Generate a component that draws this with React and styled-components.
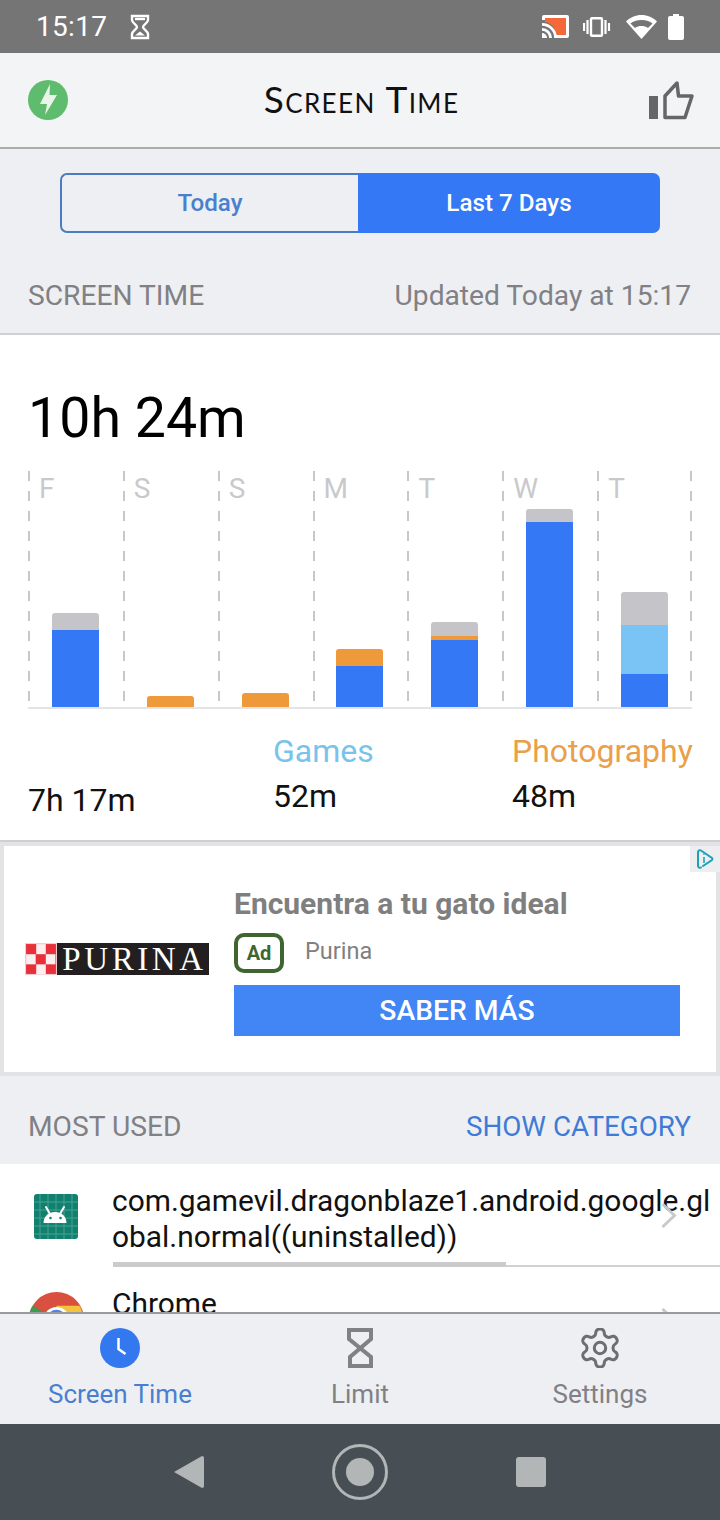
import React from 'react';
import styled, { createGlobalStyle } from 'styled-components';

const GlobalStyle = createGlobalStyle`
  html, body { margin: 0; padding: 0; background: #eeeff3; }
  * { box-sizing: border-box; }
  body { font-family: Roboto, "Liberation Sans", sans-serif; }
`;

const Screen = styled.div`
  width: 720px;
  height: 1520px;
  display: flex;
  flex-direction: column;
  overflow: hidden;
  background: #eeeff3;
`;

const StatusBar = styled.div`
  height: 53px;
  flex: none;
  background: #757575;
  display: flex;
  align-items: center;
  padding: 0 0 0 36px;
  color: #fff;
`;

const Clock = styled.span`
  font-size: 28px;
  margin-right: 23px;
  letter-spacing: 0.3px;
`;

const StatusRight = styled.div`
  margin-left: auto;
  display: flex;
  align-items: center;
  gap: 11px;
  padding-right: 36px;
`;

const Header = styled.div`
  height: 96px;
  flex: none;
  background: #f3f4f6;
  border-bottom: 2px solid #aaaaaa;
  display: grid;
  grid-template-columns: 1fr auto 1fr;
  align-items: center;
  padding: 0 25px 0 28px;
`;

const HeaderEnd = styled.div`
  justify-self: end;
  line-height: 0;
`;

const HeaderStart = styled.div`
  line-height: 0;
`;

const Title = styled.div`
  font-family: Lato, sans-serif;
  font-variant: small-caps;
  font-size: 37px;
  letter-spacing: 1.4px;
  color: #111;
  line-height: 1;
  padding-bottom: 4px;
`;

const Segmented = styled.div`
  margin: 24px 60px 0;
  height: 60px;
  flex: none;
  display: flex;
`;

const Segment = styled.div`
  flex: ${props => (props.$active ? 1 : 'none')};
  width: ${props => (props.$active ? 'auto' : '298px')};
  display: flex;
  align-items: center;
  justify-content: center;
  font-size: 24.2px;
  font-weight: 500;
  color: ${props => (props.$active ? '#fff' : '#4a7fd0')};
  background: ${props => (props.$active ? '#3478f6' : 'transparent')};
  border: ${props => (props.$active ? 'none' : '2px solid #4a7cc4')};
  border-right: none;
  border-radius: ${props => (props.$active ? '0 7px 7px 0' : '7px 0 0 7px')};
`;

const SectionHead = styled.div`
  flex: none;
  display: flex;
  align-items: center;
  justify-content: space-between;
  padding: ${props => props.$pad}px 29px 0 28px;
  height: ${props => props.$height}px;
  font-size: 28.2px;
  color: #808085;
`;

const Action = styled.span`
  color: #3f7bd6;
  font-size: 27.8px;
`;

const Card = styled.div`
  flex: none;
  height: 509px;
  background: #fff;
  border-top: 2px solid #cfcfd2;
  border-bottom: 2px solid #cfcfd2;
  padding: 53px 28px 0;
`;

const Total = styled.div`
  font-size: 55.5px;
  line-height: 62px;
  color: #000;
`;

const dashes = 'repeating-linear-gradient(to bottom, #c8c8c8 0 10px, transparent 10px 20px)';

const Chart = styled.div`
  margin-top: 21px;
  height: 238px;
  display: grid;
  grid-template-columns: repeat(7, 1fr);
  border-bottom: 2px solid #e4e4e6;
  background-image: ${dashes};
  background-size: 2px 100%;
  background-repeat: no-repeat;
  background-position: right top;
`;

const Day = styled.div`
  display: flex;
  flex-direction: column;
  justify-content: space-between;
  align-items: center;
  background-image: ${dashes};
  background-size: 2px 100%;
  background-repeat: no-repeat;
  background-position: left top;
`;

const DayLabel = styled.div`
  align-self: flex-start;
  padding: 3px 0 0 11px;
  font-size: 28px;
  line-height: 30px;
  color: #c9c9cc;
`;

const Bar = styled.div`
  width: 47px;
  display: flex;
  flex-direction: column;
  border-radius: 3px 3px 0 0;
  overflow: hidden;
`;

const Stack = styled.div`
  background: ${props => props.$color};
`;

const Stats = styled.div`
  display: grid;
  grid-template-columns: 245px 239px auto;
  align-items: end;
  margin-top: 24px;
`;

const StatName = styled.div`
  font-size: 32px;
  line-height: 36px;
  white-space: nowrap;
  color: ${props => props.$color};
`;

const StatValue = styled.div`
  font-size: 32px;
  line-height: 36px;
  color: #111;
  margin-top: 9px;
  position: relative;
  top: ${props => props.$drop || 0}px;
`;

const Ad = styled.div`
  flex: none;
  height: 234px;
  background: #fff;
  border: 4px solid #e3e3e5;
  position: relative;
  display: flex;
  align-items: center;
  padding: 0 0 0 21px;
`;

const AdChoice = styled.div`
  position: absolute;
  top: 0;
  right: -4px;
  width: 30px;
  height: 26px;
  background: #eceef0;
  display: flex;
  align-items: center;
  justify-content: center;
`;

const Logo = styled.div`
  flex: none;
  width: 184px;
  height: 32px;
  display: flex;
  background: #231f20;
`;

const LogoWord = styled.span`
  flex: 1;
  padding-left: 3px;
  font-family: "Liberation Serif", serif;
  font-size: 33px;
  line-height: 33px;
  letter-spacing: 3.6px;
  color: #fff;
  text-align: center;
  white-space: nowrap;
`;

const AdBody = styled.div`
  margin: 4px 0 0 25px;
  width: 446px;
  display: flex;
  flex-direction: column;
`;

const AdTitle = styled.div`
  font-size: 30px;
  line-height: 36px;
  font-weight: 700;
  color: #7f7f7f;
`;

const AdMeta = styled.div`
  display: flex;
  align-items: center;
  margin-top: 11px;
  font-size: 23.5px;
  color: #808080;
`;

const AdSource = styled.span`
  padding-bottom: 4px;
`;

const AdBadge = styled.div`
  width: 50px;
  height: 40px;
  border: 4px solid #3f6630;
  border-radius: 10px;
  display: flex;
  align-items: center;
  justify-content: center;
  margin-right: 21px;
  font-size: 20px;
  font-weight: 700;
  color: #3f6630;
`;

const AdButton = styled.div`
  margin-top: 12px;
  height: 51px;
  background: #4285f4;
  color: #fff;
  display: flex;
  align-items: center;
  justify-content: center;
  font-size: 28.3px;
  font-weight: 500;
`;

const List = styled.div`
  flex: 1;
  min-height: 0;
  overflow: hidden;
  background: #fff;
`;

const Row = styled.div`
  position: relative;
  display: flex;
  padding-top: ${props => props.$top}px;
`;

const RowIcon = styled.div`
  flex: none;
  width: 112px;
  display: flex;
  justify-content: center;
  padding-top: ${props => props.$top}px;
`;

const RowBody = styled.div`
  flex: 1;
  min-width: 0;
`;

const RowName = styled.div`
  font-size: 29.9px;
  line-height: 36px;
  color: #111;
  word-break: break-all;
`;

const Usage = styled.div`
  margin: 7px 0 0 1px;
  height: 5px;
  border-bottom: 2px solid #d2d2d4;
`;

const UsageFill = styled.div`
  height: 5px;
  background: #cbcbcd;
`;

const Chevron = styled.div`
  position: absolute;
  right: 42px;
  top: ${props => props.$top}px;
  line-height: 0;
`;

const TabBar = styled.div`
  flex: none;
  height: 112px;
  background: #eeeff3;
  border-top: 2px solid #999a9c;
  display: grid;
  grid-template-columns: repeat(3, 1fr);
`;

const Tab = styled.div`
  display: flex;
  flex-direction: column;
  align-items: center;
  padding-top: 14px;
  font-size: 26px;
  color: ${props => (props.$active ? '#4a7fd0' : '#808085')};
`;

const TabLabel = styled.span`
  margin-top: 10px;
  line-height: 32px;
`;

const NavBar = styled.div`
  flex: none;
  height: 96px;
  background: #474f54;
  display: flex;
  align-items: center;
  justify-content: center;
  gap: 128px;
`;

const HourglassSmall = () => (
  <svg width="20" height="26" viewBox="0 0 20 26" fill="none" stroke="#fff" strokeWidth="2.4">
    <path d="M2 2h16v4c0 3-5 5-5 7s5 4 5 7v4H2v-4c0-3 5-5 5-7S2 9 2 6z" />
    <path d="M5 21.5l5-4 5 4z" fill="#fff" stroke="none" />
    <path d="M5 5h10" />
  </svg>
);

const CastIcon = () => (
  <svg width="30" height="24" viewBox="0 0 30 24">
    <path d="M3 3h21v17H14C14 13 9 8 3 7z" fill="#f4683a" />
    <path d="M0 5V2a2 2 0 0 1 2-2h23a2 2 0 0 1 2 2v19a2 2 0 0 1-2 2H14v-3h10V3H3v2z" fill="#fff" />
    <path d="M0 8a15 15 0 0 1 15 15h-2.800A12.200 12.200 0 0 0 0 10.800z" fill="#fff" />
    <path d="M0 13a10 10 0 0 1 10 10H7.200A7.200 7.200 0 0 0 0 15.800z" fill="#fff" />
    <path d="M0 18a5 5 0 0 1 5 5H0z" fill="#fff" />
  </svg>
);

const VibrateIcon = () => (
  <svg width="30" height="20" viewBox="0 0 30 20" fill="none" stroke="#fff">
    <rect x="8" y="1.200" width="11" height="17.600" rx="1" strokeWidth="2.400" />
    <path d="M1 6v8M4.500 3v14M22.500 3v14M26 6v8" strokeWidth="2.200" />
  </svg>
);

const WifiIcon = () => (
  <svg width="33" height="24" viewBox="-2 0 33 24">
    <path d="M15.500 24L0 6.500C4 2.500 9.500 0 15.500 0S27 2.500 31 6.500z" fill="#fff" />
    <path d="M15.500 5C10.500 5 7 6.500 4.500 8.500L9 13c2-1.500 4-2 6.500-2s4.500.500 6.500 2l4.500-4.500C24 6.500 20.500 5 15.500 5z" fill="#757575" />
  </svg>
);

const BatteryIcon = () => (
  <svg width="16" height="26" viewBox="0 0 16 26">
    <path d="M5 0h6v2h3a2 2 0 0 1 2 2v20a2 2 0 0 1-2 2H2a2 2 0 0 1-2-2V4a2 2 0 0 1 2-2h3z" fill="#fff" />
  </svg>
);

const BoltBadge = () => (
  <svg width="40" height="40" viewBox="0 0 40 40">
    <circle cx="20" cy="20" r="20" fill="#5fbb6d" />
    <path d="M22 4L12 24h7l-2 11 12-20h-7.500z" fill="#e8f5e8" />
  </svg>
);

const ThumbIcon = () => (
  <svg width="46" height="40" viewBox="0 0 46 40" fill="none">
    <path d="M0 16h9v23H0z" fill="#666" />
    <path d="M16 37.500V16L28 3l1.500 13H43l-7 21.500z" stroke="#666" strokeWidth="3.500" strokeLinejoin="round" />
  </svg>
);

const AdChoiceIcon = () => (
  <svg width="20" height="22" viewBox="0 0 20 22" fill="none" stroke="#1ea0b8" strokeWidth="2">
    <path d="M3 4a2 2 0 0 1 3-1.500l11 7.500a1.500 1.500 0 0 1 0 2L8 18" strokeLinecap="round" />
    <path d="M3 4v14a2 2 0 0 0 3 1.500" strokeLinecap="round" />
    <path d="M9 9v6" stroke="#47b5c9" />
    <circle cx="9" cy="6" r="1" fill="#47b5c9" stroke="none" />
  </svg>
);

const PurinaCheck = () => (
  <svg width="32" height="32" viewBox="0 0 30 30">
    <rect width="30" height="30" fill="#f6c9cc" />
    <rect x="1" y="1" width="28" height="28" fill="#e8303a" />
    {[[10.500, 1], [1, 10.500], [19.500, 10.500], [10.500, 20]].map(([x, y]) => (
      <rect key={`${x}-${y}`} x={x} y={y} width="9" height="9.500" fill="#fbeeee" />
    ))}
  </svg>
);

const AndroidTile = () => (
  <svg width="44" height="45" viewBox="0 0 44 45">
    <rect width="44" height="45" rx="3" fill="#12806f" />
    <path d="M0 8h44M0 16h44M0 24h44M0 32h44M0 40h44M6 0v45M14 0v45M22 0v45M30 0v45M38 0v45" stroke="#45a294" strokeWidth="1" />
    <path d="M9.500 29c0-6.500 5-11 11.500-11s11.500 4.500 11.500 11z" fill="#fff" />
    <path d="M12 13l4 7M30 13l-4 7" stroke="#fff" strokeWidth="2" strokeLinecap="round" />
    <circle cx="16.500" cy="24" r="1.300" fill="#12806f" />
    <circle cx="26.500" cy="24" r="1.300" fill="#12806f" />
  </svg>
);

const ChromeIcon = () => (
  <svg width="55" height="55" viewBox="0 0 48 48">
    <circle cx="24" cy="24" r="24" fill="#d9503f" />
    <path d="M24 24L3 36a24 24 0 0 0 21 12z" fill="#3d9a4e" />
    <path d="M3 12a24 24 0 0 0 0 24l21-12z" fill="#3d9a4e" />
    <path d="M24 12h20a24 24 0 0 1-20 36z" fill="#f4c23c" />
    <circle cx="24" cy="24" r="11" fill="#fff" />
    <circle cx="24" cy="24" r="8.500" fill="#4a84ee" />
  </svg>
);

const ChevronIcon = () => (
  <svg width="18" height="27" viewBox="0 0 18 27" fill="none" stroke="#c9c9cb" strokeWidth="3">
    <path d="M2.500 2l12 11.500-12 11.500" />
  </svg>
);

const ClockTab = () => (
  <svg width="40" height="40" viewBox="0 0 40 40">
    <circle cx="20" cy="20" r="20" fill="#3478f0" />
    <path d="M18.500 10v11l7 5" fill="none" stroke="#fff" strokeWidth="2.500" />
  </svg>
);

const HourglassTab = () => (
  <svg width="26" height="40" viewBox="0 0 26 40" fill="none" stroke="#808085" strokeWidth="4">
    <path d="M2 2h22v9L3 29v9h21v-9L2 11z" />
  </svg>
);

const GearTab = () => (
  <svg width="40" height="40" viewBox="1.500 1.500 21 21" fill="none" stroke="#6e6e72" strokeWidth="1.600" strokeLinejoin="round">
    <path d="M12.220 2h-.440a2 2 0 0 0-2 2v.180a2 2 0 0 1-1 1.730l-.430.250a2 2 0 0 1-2 0l-.150-.080a2 2 0 0 0-2.730.730l-.220.380a2 2 0 0 0 .730 2.730l.150.100a2 2 0 0 1 1 1.720v.510a2 2 0 0 1-1 1.740l-.150.090a2 2 0 0 0-.730 2.730l.220.380a2 2 0 0 0 2.730.730l.150-.080a2 2 0 0 1 2 0l.430.250a2 2 0 0 1 1 1.730V20a2 2 0 0 0 2 2h.440a2 2 0 0 0 2-2v-.180a2 2 0 0 1 1-1.730l.430-.250a2 2 0 0 1 2 0l.150.080a2 2 0 0 0 2.730-.730l.220-.390a2 2 0 0 0-.730-2.730l-.150-.080a2 2 0 0 1-1-1.740v-.500a2 2 0 0 1 1-1.740l.150-.090a2 2 0 0 0 .730-2.730l-.220-.380a2 2 0 0 0-2.730-.730l-.150.080a2 2 0 0 1-2 0l-.430-.250a2 2 0 0 1-1-1.730V4a2 2 0 0 0-2-2z" />
    <circle cx="12" cy="12" r="3" />
  </svg>
);

const BackIcon = () => (
  <svg width="30" height="32" viewBox="0 0 30 32">
    <path d="M28 0a2 2 0 0 1 2 2v28a2 2 0 0 1-2 2L0 16z" fill="#b2b6b7" />
  </svg>
);

const HomeIcon = () => (
  <svg width="56" height="56" viewBox="0 0 56 56">
    <circle cx="28" cy="28" r="26.500" fill="none" stroke="#b2b6b7" strokeWidth="3" />
    <circle cx="28" cy="28" r="14" fill="#b2b6b7" />
  </svg>
);

const StopIcon = () => (
  <svg width="30" height="30" viewBox="0 0 30 30">
    <rect width="30" height="30" rx="3" fill="#b2b6b7" />
  </svg>
);

const GREY = '#c5c5c9';
const BLUE = '#3478f6';
const ORANGE = '#ef9a3a';
const SKY = '#79c3f5';

const days = [
  { label: 'F', parts: [[GREY, 17], [BLUE, 77]] },
  { label: 'S', parts: [[ORANGE, 11]] },
  { label: 'S', parts: [[ORANGE, 14]] },
  { label: 'M', parts: [[ORANGE, 17], [BLUE, 41]] },
  { label: 'T', parts: [[GREY, 14], [ORANGE, 4], [BLUE, 67]] },
  { label: 'W', parts: [[GREY, 13], [BLUE, 185]] },
  { label: 'T', parts: [[GREY, 33], [SKY, 49], [BLUE, 33]] },
];

export default function App() {
  return (
    <Screen>
      <GlobalStyle />
      <StatusBar>
        <Clock>15:17</Clock>
        <HourglassSmall />
        <StatusRight>
          <CastIcon />
          <VibrateIcon />
          <WifiIcon />
          <BatteryIcon />
        </StatusRight>
      </StatusBar>

      <Header>
        <HeaderStart><BoltBadge /></HeaderStart>
        <Title>Screen Time</Title>
        <HeaderEnd><ThumbIcon /></HeaderEnd>
      </Header>

      <Segmented>
        <Segment>Today</Segment>
        <Segment $active>Last 7 Days</Segment>
      </Segmented>

      <SectionHead $height={100} $pad={24}>
        <span>SCREEN TIME</span>
        <span>Updated Today at 15:17</span>
      </SectionHead>

      <Card>
        <Total>10h 24m</Total>
        <Chart>
          {days.map((day, i) => (
            <Day key={i}>
              <DayLabel>{day.label}</DayLabel>
              <Bar>
                {day.parts.map(([color, h], j) => (
                  <Stack key={j} $color={color} style={{ height: h }} />
                ))}
              </Bar>
            </Day>
          ))}
        </Chart>
        <Stats>
          <div>
            <StatValue $drop={4}>7h 17m</StatValue>
          </div>
          <div>
            <StatName $color="#79c3ea">Games</StatName>
            <StatValue>52m</StatValue>
          </div>
          <div>
            <StatName $color="#e9a04a">Photography</StatName>
            <StatValue>48m</StatValue>
          </div>
        </Stats>
      </Card>

      <Ad>
        <AdChoice><AdChoiceIcon /></AdChoice>
        <Logo>
          <PurinaCheck />
          <LogoWord>PURINA</LogoWord>
        </Logo>
        <AdBody>
          <AdTitle>Encuentra a tu gato ideal</AdTitle>
          <AdMeta>
            <AdBadge>Ad</AdBadge>
            <AdSource>Purina</AdSource>
          </AdMeta>
          <AdButton>SABER MÁS</AdButton>
        </AdBody>
      </Ad>

      <SectionHead $height={88} $pad={12}>
        <span>MOST USED</span>
        <Action>SHOW CATEGORY</Action>
      </SectionHead>

      <List>
        <Row $top={19}>
          <RowIcon $top={11}><AndroidTile /></RowIcon>
          <RowBody>
            <RowName>com.gamevil.dragonblaze1.android.google.global.normal((uninstalled))</RowName>
            <Usage><UsageFill style={{ width: 393 }} /></Usage>
          </RowBody>
          <Chevron $top={38}><ChevronIcon /></Chevron>
        </Row>
        <Row $top={19}>
          <RowIcon $top={6}><ChromeIcon /></RowIcon>
          <RowBody>
            <RowName>Chrome</RowName>
          </RowBody>
          <Chevron $top={40}><ChevronIcon /></Chevron>
        </Row>
      </List>

      <TabBar>
        <Tab $active>
          <ClockTab />
          <TabLabel>Screen Time</TabLabel>
        </Tab>
        <Tab>
          <HourglassTab />
          <TabLabel>Limit</TabLabel>
        </Tab>
        <Tab>
          <GearTab />
          <TabLabel>Settings</TabLabel>
        </Tab>
      </TabBar>

      <NavBar>
        <BackIcon />
        <HomeIcon />
        <StopIcon />
      </NavBar>
    </Screen>
  );
}
